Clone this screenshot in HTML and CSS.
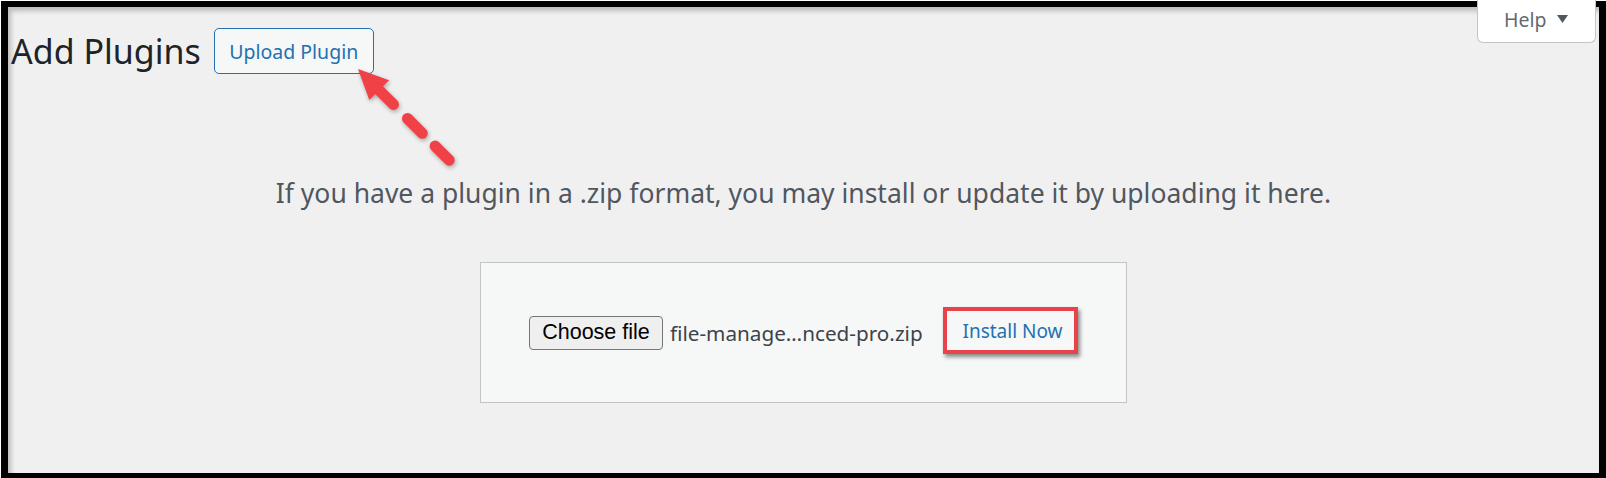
FILE: index.html
```html
<!DOCTYPE html>
<html lang="en">
<head>
<meta charset="utf-8">
<title>Add Plugins</title>
<link rel="stylesheet" href="styles.css">
</head>
<body>
<div class="frame">
  <div class="wrap">
    <div class="head">
      <h1 class="title">Add Plugins</h1>
      <a class="title-action">Upload Plugin</a>
    </div>
    <p class="install-help">If you have a plugin in a .zip format, you may install or update it by uploading it here.</p>
    <form class="upload-form">
      <button type="button" class="choose">Choose file</button>
      <span class="fname">file-manage…nced-pro.zip</span>
      <button type="button" class="install">Install Now</button>
    </form>
  </div>
  <svg class="arrow" width="130" height="120" viewBox="0 0 130 120">
    <polygon points="18,9 49.1,20.3 29.3,40.1" fill="#ef4146"/>
    <g stroke="#ef4146" stroke-width="11" stroke-linecap="round" fill="none">
      <line x1="37.8" y1="28.8" x2="53.4" y2="44.4"/>
      <line x1="67.5" y1="58.5" x2="82.3" y2="73.3"/>
      <line x1="95.1" y1="86.1" x2="109.2" y2="100.2"/>
    </g>
  </svg>
</div>
<div class="help-tab">Help<svg class="help-caret" width="11" height="8" viewBox="0 0 11 8"><polygon points="0,0 11,0 5.5,8" fill="#50575e"/></svg></div>
</body>
</html>
```
FILE: styles.css
```css
html, body {
  margin: 0;
  padding: 0;
  background: #ffffff;
}
body {
  position: relative;
  width: 1606px;
  height: 478px;
  overflow: hidden;
}
.frame {
  position: relative;
  box-sizing: border-box;
  margin: 1px 0 0 1px;
  width: 1605px;
  height: 477px;
  border-style: solid;
  border-color: #000;
  border-width: 6px 7px 5px 7px;
  background: #f0f0f1;
  box-shadow: inset 3px 4px 5px rgba(0, 0, 0, 0.22);
}
.wrap {
  padding-top: 21px;
}
.head {
  display: flex;
  align-items: center;
  height: 46px;
  padding-left: 3px;
}
.title {
  margin: 0;
  font-family: "Noto Sans", "Open Sans", sans-serif;
  font-weight: 400;
  font-size: 34px;
  line-height: 46px;
  color: #1d2327;
}
.title-action {
  box-sizing: border-box;
  display: flex;
  align-items: center;
  justify-content: center;
  margin-left: 13px;
  width: 160px;
  height: 46px;
  border: 1px solid #2271b1;
  border-radius: 5px;
  background: #f6f7f7;
  color: #2271b1;
  font-family: "Noto Sans", "Open Sans", sans-serif;
  font-size: 19.5px;
}
.install-help {
  margin: 101px 0 0;
  text-align: center;
  font-family: "Noto Sans", "Open Sans", sans-serif;
  font-size: 26.5px;
  line-height: 36px;
  color: #50575e;
}
.upload-form {
  display: flex;
  align-items: center;
  box-sizing: border-box;
  width: 647px;
  height: 141px;
  margin: 51px auto 0;
  padding: 0 48px;
  border: 1px solid #c3c4c7;
  background: #f6f7f7;
}
.choose {
  box-sizing: border-box;
  width: 134px;
  height: 34px;
  padding: 0;
  font-family: "Liberation Sans", Arial, sans-serif;
  font-size: 21.5px;
  color: #000;
  background: #efefef;
  border: 1px solid #767676;
  border-radius: 4px;
}
.fname {
  margin-left: 7px;
  font-family: "Noto Sans", "Open Sans", sans-serif;
  font-size: 20.7px;
  color: #3c434a;
}
.install {
  box-sizing: border-box;
  margin-left: auto;
  margin-bottom: 4px;
  width: 135px;
  height: 47px;
  padding: 0 0 0 4px;
  border: 4px solid #e8434a;
  background: #f6f7f7;
  color: #2271b1;
  font-family: "Noto Sans", "Open Sans", sans-serif;
  font-size: 19px;
  box-shadow: 2px 3px 4px rgba(0, 0, 0, 0.45);
}
.arrow {
  position: absolute;
  left: 332px;
  top: 53px;
  filter: drop-shadow(1px 2px 2px rgba(0, 0, 0, 0.3));
}
.help-tab {
  position: absolute;
  left: 1477px;
  top: 0;
  box-sizing: border-box;
  width: 119px;
  height: 43px;
  padding: 8px 0 0 26px;
  background: #fff;
  border: 1px solid #c3c4c7;
  border-top: 0;
  border-radius: 0 0 6px 6px;
  font-family: "Noto Sans", "Open Sans", sans-serif;
  font-size: 19.5px;
  line-height: 24px;
  color: #646970;
}
.help-caret {
  margin-left: 11px;
  vertical-align: 4px;
}
```
